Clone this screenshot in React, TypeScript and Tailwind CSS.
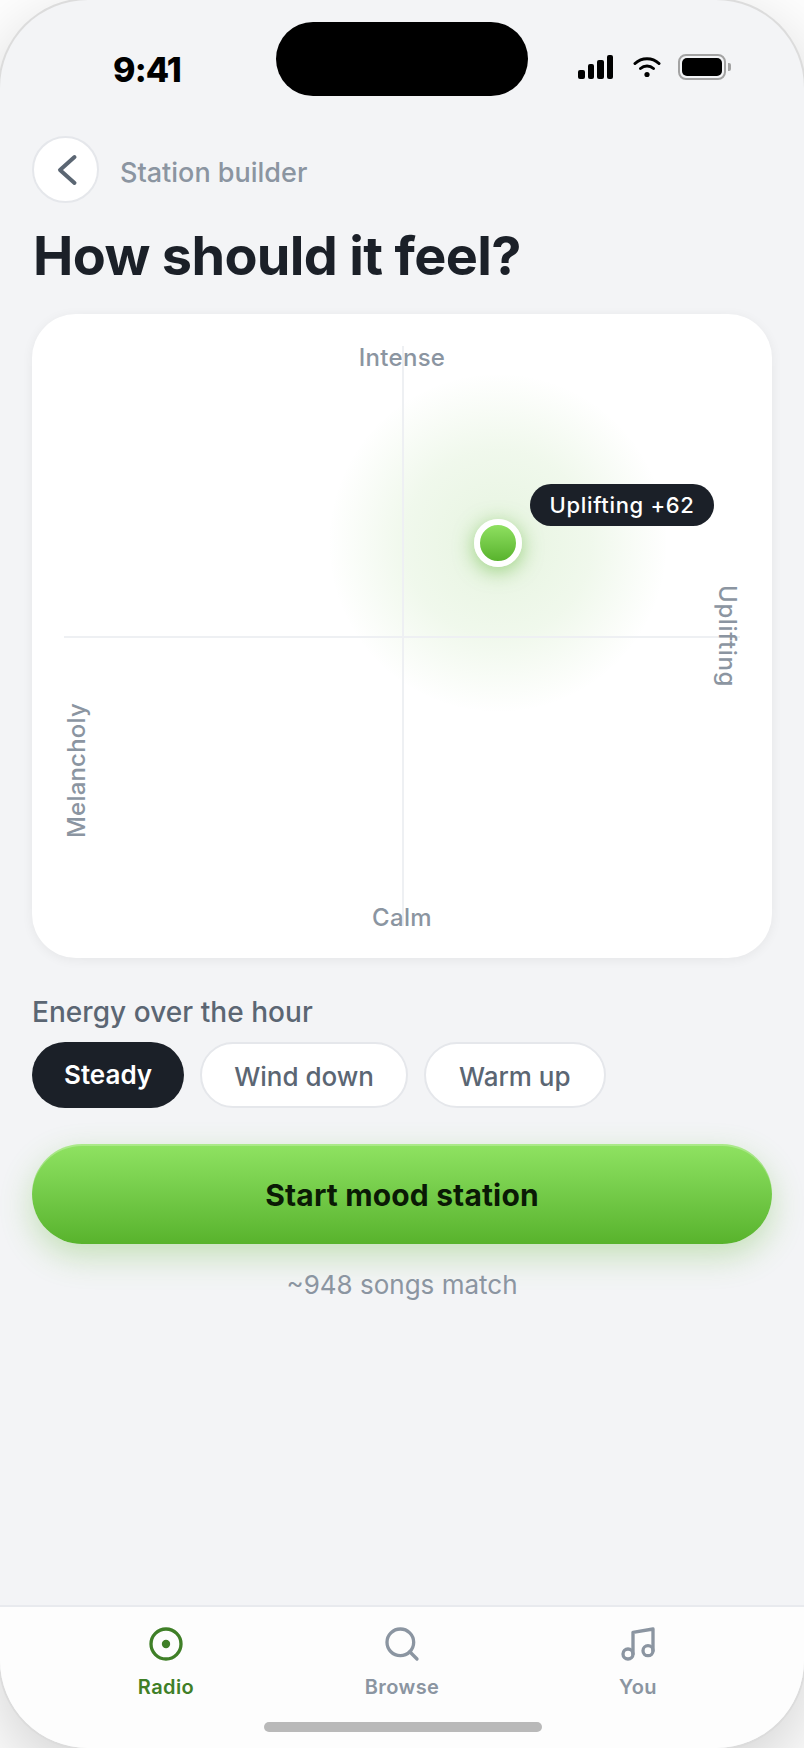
import { Music, Search } from 'lucide-react';

function StatusIcons() {
  return (
    <div className="flex items-center">
      {/* signal */}
      <div className="flex h-6 items-end gap-[3px]">
        <div className="h-[9px] w-[7px] rounded-[2px] bg-black" />
        <div className="h-[15px] w-[6px] rounded-[2px] bg-black" />
        <div className="h-[19px] w-[7px] rounded-[2px] bg-black" />
        <div className="h-6 w-[6px] rounded-[2px] bg-black" />
      </div>
      {/* wifi */}
      <svg className="ml-5 h-[22px] w-7" viewBox="0 0 28 22" fill="none" stroke="#000" strokeWidth="3" strokeLinecap="round">
        <path d="M2 7.5C8.8 1 19.2 1 26 7.5" />
        <path d="M7.5 12.5C11.2 9.2 16.8 9.2 20.5 12.5" />
        <circle cx="14" cy="18.5" r="2.6" fill="#000" stroke="none" />
      </svg>
      {/* battery */}
      <div className="ml-[17px] flex h-[26px] w-[48px] items-center justify-center rounded-[8px] border-2 border-[#a3a3a3]">
        <div className="h-[18px] w-[40px] rounded-[5px] bg-black" />
      </div>
      <div className="ml-[2px] h-2 w-[3px] rounded-r-[2px] bg-[#a3a3a3]" />
    </div>
  );
}

function MoodPad() {
  return (
    <div className="relative h-[644px] rounded-[44px] bg-white shadow-[0_2px_12px_rgba(0,0,0,0.06)]">
      <div className="absolute left-[296px] top-[59px] h-[340px] w-[340px] rounded-full bg-[radial-gradient(circle_closest-side,rgba(90,181,46,0.15)_0%,rgba(90,181,46,0.09)_55%,rgba(90,181,46,0)_100%)]" />
      {/* axes */}
      <div className="absolute bottom-8 left-[370px] top-8 w-[2px] bg-[#eef0f3]" />
      <div className="absolute left-8 right-8 top-[322px] h-[2px] bg-[#eef0f3]" />

      <span className="absolute left-0 right-0 top-[26px] text-center text-[24px] font-medium leading-9 tracking-[0.3px] text-[#8b95a1]">Intense</span>
      <span className="absolute bottom-[22px] left-0 right-0 text-center text-[24px] font-medium leading-9 tracking-[0.3px] text-[#8b95a1]">Calm</span>
      <span className="absolute left-[-22px] top-[439px] w-[134px] -rotate-90 text-center text-[24px] font-medium leading-9 tracking-[0.2px] text-[#8b95a1]">Melancholy</span>
      <span className="absolute right-[-10px] top-[304px] w-[110px] rotate-90 text-center text-[24px] font-medium leading-9 tracking-[0.6px] text-[#8b95a1]">Uplifting</span>

      {/* handle */}
      <div className="absolute left-[442px] top-[205px] h-12 w-12 rounded-full border-[6px] border-white bg-gradient-to-b from-[#8fe060] to-[#58b32c] shadow-[0_4px_20px_rgba(88,179,44,0.55)]" />
      <div className="absolute left-[498px] top-[170px] flex h-[42px] w-[184px] items-center justify-center rounded-full bg-[#1b2028] pt-[1px] text-[22px] font-medium tracking-[0.03em] text-white">
        Uplifting +62
      </div>
    </div>
  );
}

export default function App() {
  return (
    <div className="h-[1748px] w-[804px] overflow-hidden bg-white font-['Inter',sans-serif]">
      <div className="relative flex h-full w-full flex-col rounded-[88px] bg-[#f3f4f6] shadow-[0_0_0_2px_#dcdcdc,0_24px_80px_rgba(0,0,0,0.2)]">
        {/* dynamic island */}
        <div className="absolute left-[276px] top-[22px] h-[74px] w-[252px] rounded-full bg-black" />

        <div className="flex h-[136px] items-start justify-between pl-[113px] pr-[73px] pt-[48px]">
          <span className="text-[34px] font-extrabold leading-[44px] tracking-[-0.025em] text-black">9:41</span>
          <div className="pt-[6px]">
            <StatusIcons />
          </div>
        </div>

        <div className="flex flex-1 flex-col px-8">
          <div className="flex items-center gap-[21px]">
            <button type="button" className="flex h-[67px] w-[67px] items-center justify-center rounded-full border-2 border-[#e5e7eb] bg-white">
              <svg className="h-8 w-6 translate-x-[1px]" viewBox="0 0 24 32" fill="none" stroke="#5b6673" strokeWidth="4" strokeLinecap="round" strokeLinejoin="round">
                <path d="M19.5 3 5 16l14.5 13" />
              </svg>
            </button>
            <span className="pt-2 text-[27px] font-medium text-[#8b95a1]">Station builder</span>
          </div>

          <h1 className="mt-[21px] pl-[1px] text-[54px] font-bold leading-[64px] tracking-[-0.012em] text-[#1b2028]">How should it feel?</h1>

          <div className="mt-[26px]">
            <MoodPad />
          </div>

          <p className="mt-[36px] text-[28px] font-medium leading-9 tracking-[0.05px] text-[#5b6673]">Energy over the hour</p>

          <div className="mt-[12px] flex gap-4">
            <button type="button" className="h-[66px] rounded-full bg-[#1b2028] px-8 pb-[2px] text-[26px] font-semibold text-white">Steady</button>
            <button type="button" className="h-[66px] rounded-full border-2 border-[#e5e7eb] bg-white px-8 pt-[2px] text-[26px] font-medium text-[#5b6673]">Wind down</button>
            <button type="button" className="h-[66px] rounded-full border-2 border-[#e5e7eb] bg-white px-[33px] pt-[2px] text-[26px] font-medium text-[#5b6673]">Warm up</button>
          </div>

          <button type="button" className="mt-9 h-[100px] w-full rounded-full bg-gradient-to-b from-[#8fe362] to-[#58b32c] pt-[2px] text-[30px] font-bold tracking-[0.15px] text-[#0a1a05] shadow-[inset_0_2px_0_rgba(255,255,255,0.25),0_12px_32px_rgba(88,179,44,0.3)]">
            Start mood station
          </button>

          <p className="mt-[23px] text-center text-[26px] leading-9 text-[#8b95a1]">~948 songs match</p>
        </div>

        {/* tab bar */}
        <nav className="relative h-[143px] overflow-hidden rounded-b-[88px] border-t-2 border-[#e8eaee] bg-[#fdfdfd]">
          <div className="grid grid-cols-3 px-12 pt-[17px]">
            <div className="flex flex-col items-center gap-[11px] text-[#3f7f27]">
              <svg className="h-10 w-10" viewBox="0 0 24 24" fill="none" stroke="currentColor" strokeWidth="2">
                <circle cx="12" cy="12" r="9" />
                <circle cx="12" cy="12" r="2.5" fill="currentColor" stroke="none" />
              </svg>
              <span className="text-[20px] font-semibold leading-6 tracking-[0.4px]">Radio</span>
            </div>
            <div className="flex flex-col items-center gap-[11px] text-[#8b95a1]">
              <Search className="h-10 w-10" />
              <span className="text-[20px] font-semibold leading-6 tracking-[0.4px]">Browse</span>
            </div>
            <div className="flex flex-col items-center gap-[11px] text-[#8b95a1]">
              <Music className="h-10 w-10" />
              <span className="text-[20px] font-semibold leading-6 tracking-[0.4px]">You</span>
            </div>
          </div>
          <div className="absolute bottom-4 left-[264px] h-[10px] w-[278px] rounded-full bg-[#b9b9b9]" />
        </nav>
      </div>
    </div>
  );
}
